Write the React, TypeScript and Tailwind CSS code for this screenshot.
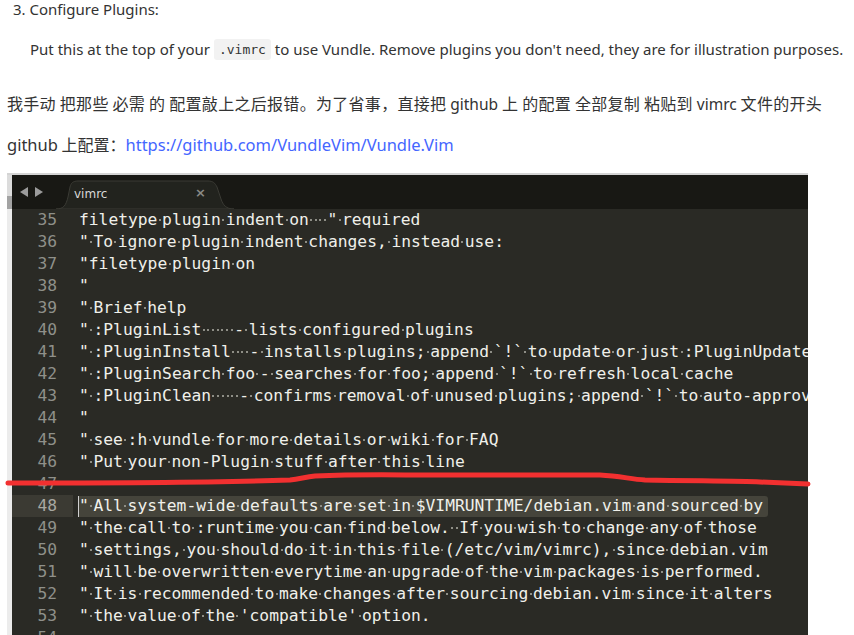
import React from "react";

const code: [number, string][] = [
  [35, 'filetype plugin indent on    " required'],
  [36, '" To ignore plugin indent changes, instead use:'],
  [37, '"filetype plugin on'],
  [38, '"'],
  [39, '" Brief help'],
  [40, '" :PluginList       - lists configured plugins'],
  [41, '" :PluginInstall    - installs plugins; append `!` to update or just :PluginUpdate'],
  [42, '" :PluginSearch foo - searches for foo; append `!` to refresh local cache'],
  [43, '" :PluginClean      - confirms removal of unused plugins; append `!` to auto-approve removal'],
  [44, '"'],
  [45, '" see :h vundle for more details or wiki for FAQ'],
  [46, '" Put your non-Plugin stuff after this line'],
  [47, ''],
  [48, '" All system-wide defaults are set in $VIMRUNTIME/debian.vim and sourced by'],
  [49, '" the call to :runtime you can find below.  If you wish to change any of those'],
  [50, '" settings, you should do it in this file (/etc/vim/vimrc), since debian.vim'],
  [51, '" will be overwritten everytime an upgrade of the vim packages is performed.'],
  [52, '" It is recommended to make changes after sourcing debian.vim since it alters'],
  [53, "\" the value of the 'compatible' option."],
  [54, ''],
];

function Ws({ text }: { text: string }) {
  const parts = text.split(/( +)/);
  return (
    <>
      {parts.map((p, i) =>
        p.startsWith(" ") ? (
          <React.Fragment key={i}>
            {Array.from({ length: p.length }).map((_, j) => (
              <span key={j} className="inline-block w-[4.7px] align-middle">
                <span className="block mx-auto w-[2px] h-[2px] bg-[#8e8e86]" />
              </span>
            ))}
          </React.Fragment>
        ) : (
          <span key={i}>{p}</span>
        )
      )}
    </>
  );
}

const latin = { fontFamily: '"Noto Sans", sans-serif' };

export default function App() {
  return (
    <div
      className="relative w-[854px] h-[635px] overflow-hidden bg-white text-[#333]"
      style={{ fontFamily: '"Noto Sans", "Noto Sans CJK SC", sans-serif' }}
    >
      <div className="pl-[13px] h-[18px] text-[15px] leading-[18px] whitespace-nowrap">3. Configure Plugins:</div>
      <div className="mt-[21px] h-[21px] pl-[30px] text-[15px] leading-[21px] whitespace-nowrap">
        Put this at the top of your{" "}
        <code
          className="inline-block align-top rounded-[3px] bg-[#f2f2f2] px-[5px] text-[13px] leading-[21px] text-[#333]"
          style={{ fontFamily: '"DejaVu Sans Mono", monospace' }}
        >
          .vimrc
        </code>{" "}
        to use Vundle. Remove plugins you don't need, they are for illustration purposes.
      </div>
      <div
        className="mt-[33px] h-[20px] pl-[7px] text-[16px] leading-[20px] whitespace-nowrap tracking-[0.3px]"
        style={{ fontFamily: '"Noto Sans CJK SC", sans-serif' }}
      >
        我手动 把那些 必需 的 配置敲上之后报错。为了省事，直接把{" "}
        <span className="text-[15.5px] leading-[20px] tracking-normal" style={latin}>github</span> 上 的配置 全部复制 粘贴到{" "}
        <span className="text-[15.5px] leading-[20px] tracking-normal" style={latin}>vimrc</span> 文件的开头
      </div>
      <div
        className="mt-[21px] h-[20px] pl-[7px] text-[16px] leading-[20px] whitespace-nowrap"
        style={{ fontFamily: '"Noto Sans CJK SC", sans-serif' }}
      >
        <span className="text-[16.5px] leading-[20px]" style={latin}>github</span> 上配置：
        <span className="text-[16.5px] leading-[20px] text-[#4466ff]" style={latin}>
          https://github.com/VundleVim/Vundle.Vim
        </span>
      </div>

      {/* editor screenshot */}
      <div className="mt-[19px] ml-[7px] w-[801px] border-t-2 border-[#d4d4d4] flex">
        <div className="w-[5px] flex flex-col">
          <div className="h-[21px] bg-[#dcdcdc]" />
          <div className="h-[13px] bg-[#a3a3a3]" />
          <div className="h-[600px] bg-[#ececec]" />
        </div>
        <div className="w-[796px] overflow-hidden">
          <div className="relative h-[34px] bg-[#181814]">
            <div className="absolute left-[8px] top-[12px] flex gap-[5px] text-[#9c9c9c]">
              <svg width="9" height="10" viewBox="0 0 9 10">
                <path d="M8 0 L0 5 L8 10 Z" fill="currentColor" />
              </svg>
              <svg width="9" height="10" viewBox="0 0 9 10">
                <path d="M1 0 L9 5 L1 10 Z" fill="currentColor" />
              </svg>
            </div>
            <svg className="absolute left-0 top-0" width="240" height="34" viewBox="0 0 240 34">
              <path
                d="M44 34 C52 34 54 30 56 22 L58 12 C59 8 61 6 66 6 L196 6 C201 6 203 8 205 12 L209 24 C211 30 214 34 222 34 Z"
                fill="#22231e"
                stroke="#3a3a34"
                strokeWidth="1"
              />
            </svg>
            <div
              className="absolute left-[62px] top-[11px] text-[12px] leading-[16px] text-[#d8d8d8]"
              style={{ fontFamily: '"DejaVu Sans", sans-serif' }}
            >
              vimrc
            </div>
            <div
              className="absolute left-[183px] top-[10px] text-[13px] leading-[16px] font-bold text-[#8a8a86]"
              style={{ fontFamily: '"DejaVu Sans", sans-serif' }}
            >
              ×
            </div>
          </div>
          <div
            className="bg-[#2a2a25] text-[16.3px] text-[#f0f0ea]"
            style={{ fontFamily: '"DejaVu Sans Mono", monospace' }}
          >
            {code.map(([n, t]) => {
              const active = n === 48;
              return (
                <div key={n} className="flex h-[22px] items-center whitespace-nowrap">
                  <div
                    className={`w-[61px] shrink-0 h-full flex items-center justify-end pr-[16px] ${
                      active ? "bg-[#3b3a33] text-[#a8a8a2]" : "text-[#8f908a]"
                    }`}
                  >
                    {n}
                  </div>
                  {active ? (
                    <div className="pl-[5px] h-full flex items-center">
                      <span className="h-[21px] flex items-center border-l border-[#d0d0d0] bg-[#45443b] rounded-r-[3px] pr-[5px]">
                        <Ws text={t} />
                      </span>
                    </div>
                  ) : (
                    <div className="pl-[6px]">
                      <Ws text={t} />
                    </div>
                  )}
                </div>
              );
            })}
          </div>
        </div>
      </div>

      {/* hand-drawn red underline */}
      <svg className="absolute left-0 top-0 pointer-events-none" width="854" height="635" viewBox="0 0 854 635">
        <path
          d="M8 483 C120 483 230 482 290 480 C300 479 305 477 315 476 C360 474 400 475 424 475 L600 475 C620 476 630 479 645 480 C700 481 740 481 760 482 L808 484"
          fill="none"
          stroke="#f23030"
          strokeWidth="5"
          strokeLinecap="round"
        />
      </svg>
    </div>
  );
}
